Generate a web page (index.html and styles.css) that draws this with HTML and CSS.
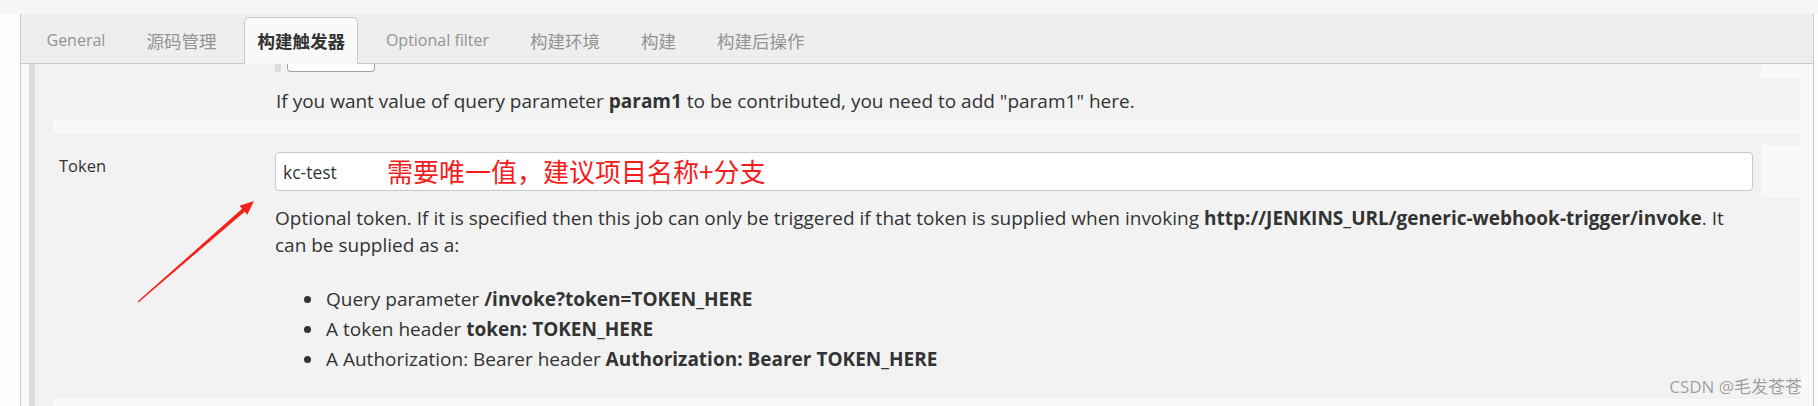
FILE: index.html
```html
<!DOCTYPE html>
<html lang="zh-CN">
<head>
<meta charset="utf-8">
<title>构建触发器</title>
<link rel="stylesheet" href="styles.css">
</head>
<body>
<div class="page">
  <div class="topstrip"></div>
  <div class="panel">
    <div class="tabs">
      <div class="tab">General</div>
      <div class="tab cjk">源码管理</div>
      <div class="tab cjk active">构建触发器</div>
      <div class="tab">Optional filter</div>
      <div class="tab cjk">构建环境</div>
      <div class="tab cjk">构建</div>
      <div class="tab cjk">构建后操作</div>
    </div>
    <div class="body">
      <div class="gutter"></div>
      <div class="rail"></div>
      <div class="content">
        <div class="sec-a">
          <div class="sec-a-main">
            <div class="remnant"><span class="remnant-bar"></span><span class="remnant-btn"></span></div>
            <p class="desc">If you want value of query parameter <b>param1</b> to be contributed, you need to add "param1" here.</p>
          </div>
          <div class="help-col"><div class="help-stub"></div></div>
        </div>
        <div class="band"></div>
        <div class="row">
          <div class="label">Token</div>
          <div class="field">
            <div class="input-wrap">
              <input class="text-input" type="text" value="kc-test">
              <span class="note">需要唯一值，建议项目名称+分支</span>
            </div>
            <p class="desc help-text"><span class="line">Optional token. If it is specified then this job can only be triggered if that token is supplied when invoking <b>http://JENKINS_URL/generic-webhook-trigger/invoke</b>. It</span><br><span class="line">can be supplied as a:</span></p>
            <ul class="opts">
              <li>Query parameter <b>/invoke?token=TOKEN_HERE</b></li>
              <li>A token header <b>token: TOKEN_HERE</b></li>
              <li>A Authorization: Bearer header <b>Authorization: Bearer TOKEN_HERE</b></li>
            </ul>
          </div>
          <div class="help-col"><div class="help-box"></div></div>
        </div>
        <div class="band band-bottom"></div>
      </div>
      <div class="rstrip"></div>
    </div>
  </div>
  <svg class="arrow" width="1818" height="406" viewBox="0 0 1818 406">
    <polygon fill="#f5221b" points="254,201 247.3,214.7 244.7,211.7 138.4,302.4 137.6,301.6 242.1,208.7 239.5,205.7"/>
  </svg>
  <div class="watermark">CSDN @毛发苍苍</div>
</div>
</body>
</html>
```

FILE: styles.css
```css
* { box-sizing: border-box; }
html, body { margin: 0; padding: 0; background: #fcfcfc; }
body {
  font-family: "Open Sans", "Noto Sans CJK SC", sans-serif;
  font-size: 16.5px;
  color: #333;
}
.page {
  position: relative;
  width: 1818px;
  height: 406px;
  overflow: hidden;
}
.topstrip {
  height: 14px;
  background: #f6f6f6;
}
.panel {
  margin-left: 20px;
  width: 1794px;
  height: 392px;
  border-left: 1px solid #cacaca;
  border-right: 1px solid #cacaca;
  display: flex;
  flex-direction: column;
}
.tabs {
  height: 50px;
  flex: none;
  background: #eeeeee;
  border-bottom: 1px solid #cacaca;
  display: flex;
  align-items: flex-end;
  gap: 14px;
  padding-left: 12px;
}
.tab {
  height: 46px;
  padding: 0 13.5px;
  display: flex;
  align-items: center;
  color: #939393;
  font-size: 16px;
  white-space: nowrap;
}
.tab.cjk {
  font-family: "Noto Sans CJK SC", sans-serif;
  font-size: 17.5px;
}
.tab.active {
  height: 47px;
  margin-bottom: -1px;
  padding: 0 12.5px 1px;
  background: #f9f9f9;
  border: 1px solid #cacaca;
  border-bottom: none;
  border-radius: 5px 5px 0 0;
  color: #333;
  font-weight: 700;
  position: relative;
  z-index: 1;
}
.body {
  flex: 1;
  display: flex;
}
.gutter { width: 8px; background: #fafafa; flex: none; }
.rail { width: 6px; background: #dddddd; flex: none; }
.rstrip { width: 13px; background: #f9f9f9; flex: none; }
.content {
  flex: 1;
  background: #f2f2f2;
  display: flex;
  flex-direction: column;
}
.sec-a {
  display: flex;
  height: 56px;
  flex: none;
}
.sec-a-main {
  flex: 1;
  padding-left: 240px;
}
.remnant {
  height: 8px;
  display: flex;
}
.remnant-bar {
  width: 6px;
  height: 8px;
  background: #dddddd;
}
.remnant-btn {
  margin-left: 6px;
  width: 88px;
  height: 8px;
  background: #fff;
  border: 1px solid #9aa3ad;
  border-top: none;
  border-radius: 0 0 4px 4px;
}
.desc {
  margin: 16px 0 0 1px;
  font-size: 19px;
  line-height: 27px;
  white-space: nowrap;
}
.help-col {
  width: 39px;
  flex: none;
}
.help-stub {
  height: 14px;
  background: #f9f9f9;
}
.band {
  height: 13px;
  flex: none;
  margin-left: 18px;
  background: #f9f9f9;
}
.band-bottom { flex: 1; }
.row {
  display: flex;
  height: 266px;
  flex: none;
}
.label {
  width: 240px;
  flex: none;
  padding: 19px 0 0 24px;
  line-height: 27px;
}
.field {
  flex: 1;
  padding: 19px 8px 0 0;
}
.input-wrap {
  position: relative;
  height: 39px;
}
.text-input {
  display: block;
  width: 100%;
  height: 39px;
  margin: 0;
  padding: 0 7px;
  border: 1px solid #c8c8c8;
  border-radius: 4px;
  background: #fff;
  font-family: "Open Sans", sans-serif;
  font-size: 17.5px;
  color: #333;
  outline: none;
}
.note {
  position: absolute;
  left: 112px;
  top: 0;
  line-height: 37px;
  font-family: "Noto Sans CJK SC", sans-serif;
  font-size: 26px;
  color: #f71c1c;
  white-space: nowrap;
}
.help-text {
  margin: 14px 0 0 0;
}
.opts {
  list-style: none;
  margin: 25px 0 0 0;
  padding: 0 0 0 29px;
  font-size: 19px;
}
.opts li {
  display: flex;
  align-items: center;
  line-height: 30px;
  white-space: pre;
}
.opts li::before {
  content: "";
  width: 7px;
  height: 7px;
  border-radius: 50%;
  background: #333;
  margin-right: 15px;
  flex: none;
}
.help-box {
  margin-top: 12px;
  height: 52px;
  background: #f9f9f9;
}
.arrow {
  position: absolute;
  left: 0;
  top: 0;
  pointer-events: none;
}
.watermark {
  position: absolute;
  right: 16px;
  bottom: 8px;
  font-family: "Open Sans", "Noto Sans CJK SC", sans-serif;
  font-size: 17px;
  line-height: 22px;
  color: #9d9d9d;
  text-shadow: 0 0 1px #ffffff, 0 0 1px #ffffff;
  white-space: nowrap;
}
```
